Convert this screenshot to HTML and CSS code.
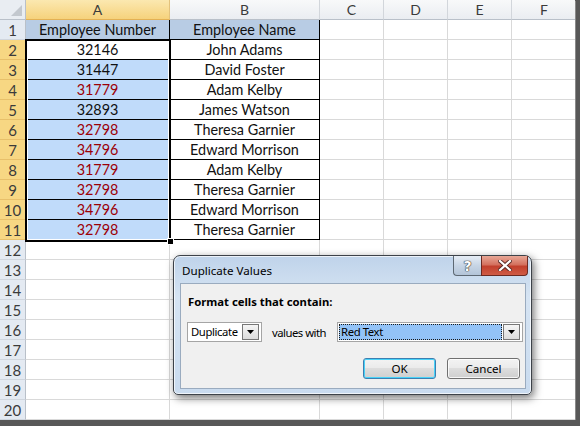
FILE: index.html
```html
<!DOCTYPE html>
<html>
<head>
  <title>Duplicate Values</title>
  <link rel="stylesheet" href="styles.css">
</head>
<body>
  <div class="sheet">
    <table class="grid">
      <colgroup>
        <col class="c-rh"><col class="c-a"><col class="c-b"><col class="c-n"><col class="c-n"><col class="c-n"><col class="c-f">
      </colgroup>
      <thead>
        <tr>
          <th class="corner"><span class="tri"></span></th>
          <th class="col sel">A</th>
          <th class="col">B</th>
          <th class="col">C</th>
          <th class="col">D</th>
          <th class="col">E</th>
          <th class="col">F</th>
        </tr>
      </thead>
      <tbody>
        <tr><th class="row">1</th><td class="tb hd">Employee Number</td><td class="tb hd">Employee Name</td><td></td><td></td><td></td><td></td></tr>
        <tr><th class="row sel">2</th><td class="tb active">32146</td><td class="tb">John Adams</td><td></td><td></td><td></td><td></td></tr>
        <tr><th class="row sel">3</th><td class="tb pick">31447</td><td class="tb">David Foster</td><td></td><td></td><td></td><td></td></tr>
        <tr><th class="row sel">4</th><td class="tb pick dup">31779</td><td class="tb">Adam Kelby</td><td></td><td></td><td></td><td></td></tr>
        <tr><th class="row sel">5</th><td class="tb pick">32893</td><td class="tb">James Watson</td><td></td><td></td><td></td><td></td></tr>
        <tr><th class="row sel">6</th><td class="tb pick dup">32798</td><td class="tb">Theresa Garnier</td><td></td><td></td><td></td><td></td></tr>
        <tr><th class="row sel">7</th><td class="tb pick dup">34796</td><td class="tb">Edward Morrison</td><td></td><td></td><td></td><td></td></tr>
        <tr><th class="row sel">8</th><td class="tb pick dup">31779</td><td class="tb">Adam Kelby</td><td></td><td></td><td></td><td></td></tr>
        <tr><th class="row sel">9</th><td class="tb pick dup">32798</td><td class="tb">Theresa Garnier</td><td></td><td></td><td></td><td></td></tr>
        <tr><th class="row sel">10</th><td class="tb pick dup">34796</td><td class="tb">Edward Morrison</td><td></td><td></td><td></td><td></td></tr>
        <tr><th class="row sel">11</th><td class="tb pick dup">32798</td><td class="tb">Theresa Garnier</td><td></td><td></td><td></td><td></td></tr>
        <tr><th class="row">12</th><td></td><td></td><td></td><td></td><td></td><td></td></tr>
        <tr><th class="row">13</th><td></td><td></td><td></td><td></td><td></td><td></td></tr>
        <tr><th class="row">14</th><td></td><td></td><td></td><td></td><td></td><td></td></tr>
        <tr><th class="row">15</th><td></td><td></td><td></td><td></td><td></td><td></td></tr>
        <tr><th class="row">16</th><td></td><td></td><td></td><td></td><td></td><td></td></tr>
        <tr><th class="row">17</th><td></td><td></td><td></td><td></td><td></td><td></td></tr>
        <tr><th class="row">18</th><td></td><td></td><td></td><td></td><td></td><td></td></tr>
        <tr><th class="row">19</th><td></td><td></td><td></td><td></td><td></td><td></td></tr>
        <tr><th class="row">20</th><td></td><td></td><td></td><td></td><td></td><td></td></tr>
      </tbody>
    </table>

    <div class="selection"><span class="handle"></span></div>

    <div class="dialog">
      <div class="titlebar">
        <span class="title">Duplicate Values</span>
        <div class="caption-btns">
          <span class="cap help">?</span>
          <span class="cap close">
            <svg width="14" height="11" viewBox="0 0 14 11">
              <path d="M2 1 L12 10 M12 1 L2 10" stroke="#5a2a26" stroke-width="4" stroke-linecap="square"/>
              <path d="M2 1 L12 10 M12 1 L2 10" stroke="#fff" stroke-width="2.2" stroke-linecap="square"/>
            </svg>
          </span>
        </div>
      </div>
      <div class="panel">
        <div class="heading">Format cells that contain:</div>
        <div class="controls">
          <div class="combo combo-type">
            <span class="value">Duplicate</span>
            <span class="arrow"><svg width="7" height="4" viewBox="0 0 7 4"><path d="M0 0 H7 L3.5 4 Z" fill="#000"/></svg></span>
          </div>
          <span class="label">values with</span>
          <div class="combo combo-format">
            <span class="value focus">Red Text</span>
            <span class="arrow"><svg width="7" height="4" viewBox="0 0 7 4"><path d="M0 0 H7 L3.5 4 Z" fill="#000"/></svg></span>
          </div>
        </div>
        <div class="buttons">
          <button class="btn default">OK</button>
          <button class="btn">Cancel</button>
        </div>
      </div>
    </div>
  </div>
</body>
</html>
```

FILE: styles.css
```css
body {
  margin: 0;
  background: #585858;
  overflow: hidden;
}

.sheet {
  position: relative;
  width: 575px;
  height: 420px;
  overflow: hidden;
  background: #fff;
  box-shadow: 1px 1px 0 #8a8a8a;
}

/* grid */
.grid {
  border-collapse: separate;
  border-spacing: 0;
  table-layout: fixed;
  width: 577px;
  font-family: Lato, "Liberation Sans", sans-serif;
  font-size: 14.4px;
}

.c-rh { width: 26px; }
.c-a  { width: 144px; }
.c-b  { width: 150px; }
.c-n  { width: 64px; }
.c-f  { width: 65px; }

.grid td,
.grid th {
  height: 18px;
  padding: 1px 0 0;
  border-right: 1px solid #d9d9d9;
  border-bottom: 1px solid #d9d9d9;
  text-align: center;
  white-space: nowrap;
  overflow: hidden;
  line-height: 18px;
}

.grid th {
  font-weight: normal;
  color: #3b3b3b;
}

.grid thead th {
  padding-top: 0;
  height: 19px;
}

.corner {
  position: relative;
  background: #e9edf2;
  border-right-color: #b9c0c9 !important;
  border-bottom-color: #b9c0c9 !important;
}

.tri {
  position: absolute;
  right: 3px;
  bottom: 3px;
  width: 0;
  height: 0;
  border-left: 11px solid transparent;
  border-bottom: 11px solid #c3c8ce;
}

.col {
  font-size: 14px;
  background: linear-gradient(#f8f9fa, #eaedf1);
  border-right-color: #d2d6db !important;
  border-bottom-color: #b9c0c9 !important;
}

.col.sel {
  background: linear-gradient(#fbe8b0, #f6d27c);
  border-bottom-color: #e3b154 !important;
  border-right-color: #e3c27c !important;
}

.row {
  font-size: 15px;
  background: #e4eaf2;
  border-right-color: #b9c0c9 !important;
  border-bottom-color: #d0d6de !important;
}

.row.sel {
  background: #f7d783;
  border-bottom-color: #e8c06a !important;
  border-right-color: #d7a743 !important;
}

.tb {
  color: #111;
  border-right-color: #000 !important;
  border-bottom-color: #000 !important;
}

.hd {
  background: #b8cce4;
}

.pick {
  background: #c0dbfa;
}

.dup {
  color: #9c0006;
}

/* selection outline over A2:A11 */
.selection {
  position: absolute;
  left: 25px;
  top: 39px;
  width: 146px;
  height: 203px;
  box-sizing: border-box;
  border: 2px solid #000;
  box-shadow: inset 0 0 0 1px #fff;
}

.handle {
  position: absolute;
  right: -5px;
  bottom: -5px;
  width: 5px;
  height: 5px;
  background: #000;
  border: 1px solid #fff;
}

/* dialog */
.dialog {
  position: absolute;
  left: 173px;
  top: 255px;
  width: 359px;
  height: 140px;
  box-sizing: border-box;
  border: 1px solid #3d4249;
  border-radius: 7px 7px 5px 5px;
  background: linear-gradient(#bfd3ea, #d6e4f3 30%, #c9dbef);
  box-shadow: 2px 3px 8px rgba(0, 0, 0, 0.55), inset 0 0 0 1px rgba(255, 255, 255, 0.7);
  font-family: "Noto Sans", "Open Sans", sans-serif;
  font-size: 11.3px;
  color: #000;
}

.titlebar {
  display: flex;
  justify-content: space-between;
  align-items: flex-start;
  height: 27px;
}

.title {
  padding: 7px 0 0 8px;
  line-height: 16px;
  font-size: 11.6px;
}

.caption-btns {
  display: flex;
  margin-right: 3px;
}

.cap {
  display: flex;
  align-items: center;
  justify-content: center;
  height: 19px;
  border: 1px solid #5d6873;
  border-top: none;
}

.help {
  width: 27px;
  border-radius: 0 0 0 4px;
  border-right: none;
  background: linear-gradient(#e6edf5, #c7d5e5 50%, #b3c4d8);
  font-family: "DejaVu Sans", sans-serif;
  font-size: 14px;
  font-weight: bold;
  color: #fff;
  text-shadow: 0 0 1px #333, 0 0 1px #333, 0 0 1px #333;
}

.close {
  width: 45px;
  border-radius: 0 0 4px 0;
  border-color: #6b2a22;
  background: linear-gradient(#e8a897, #d4715f 45%, #c2402d 55%, #cf5b45);
}

.panel {
  margin: 0 5px 0 6px;
  height: 106px;
  box-sizing: border-box;
  border: 1px solid #9aabbf;
  background: #f0f0f0;
  padding: 10px 5px 0 6px;
}

.heading {
  font-weight: bold;
  line-height: 16px;
  padding-left: 1px;
}

.controls {
  display: flex;
  align-items: center;
  margin-top: 12px;
  height: 20px;
}

.combo {
  position: relative;
  display: flex;
  align-items: center;
  flex-shrink: 0;
  height: 20px;
  box-sizing: border-box;
  border: 1px solid #a5a5a5;
  background: #fff;
}

.combo-type {
  width: 75px;
}

.combo-format {
  width: 186px;
  margin-left: 11px;
}

.combo .value {
  flex: 1;
  padding-left: 3px;
  line-height: 16px;
  white-space: nowrap;
  letter-spacing: -0.4px;
}

.combo-format .value {
  margin: 1px;
  padding-left: 2px;
  height: 16px;
  background: #93c3f7;
  outline: 1px dotted #1a1a1a;
  outline-offset: -1px;
}

.arrow {
  display: flex;
  align-items: center;
  justify-content: center;
  flex-shrink: 0;
  width: 15px;
  height: 14px;
  margin-right: 2px;
  border: 1px solid #777;
  background: linear-gradient(#f5f5f5, #dcdcdc);
}

.label {
  margin-left: 10px;
  white-space: nowrap;
  letter-spacing: -0.5px;
}

.buttons {
  display: flex;
  justify-content: flex-end;
  gap: 11px;
  margin-top: 16px;
}

.btn {
  width: 73px;
  height: 21px;
  padding: 0;
  border: 1px solid #707070;
  border-radius: 3px;
  background: linear-gradient(#f3f3f3, #ebebeb 45%, #dddddd 50%, #cfcfcf);
  box-shadow: inset 0 0 0 1px rgba(255, 255, 255, 0.8);
  font-family: "Noto Sans", "Open Sans", sans-serif;
  font-size: 11.6px;
  color: #000;
}

.btn.default {
  border-color: #3c7fb1;
  box-shadow: inset 0 0 0 1px #48d2f8;
}
```
